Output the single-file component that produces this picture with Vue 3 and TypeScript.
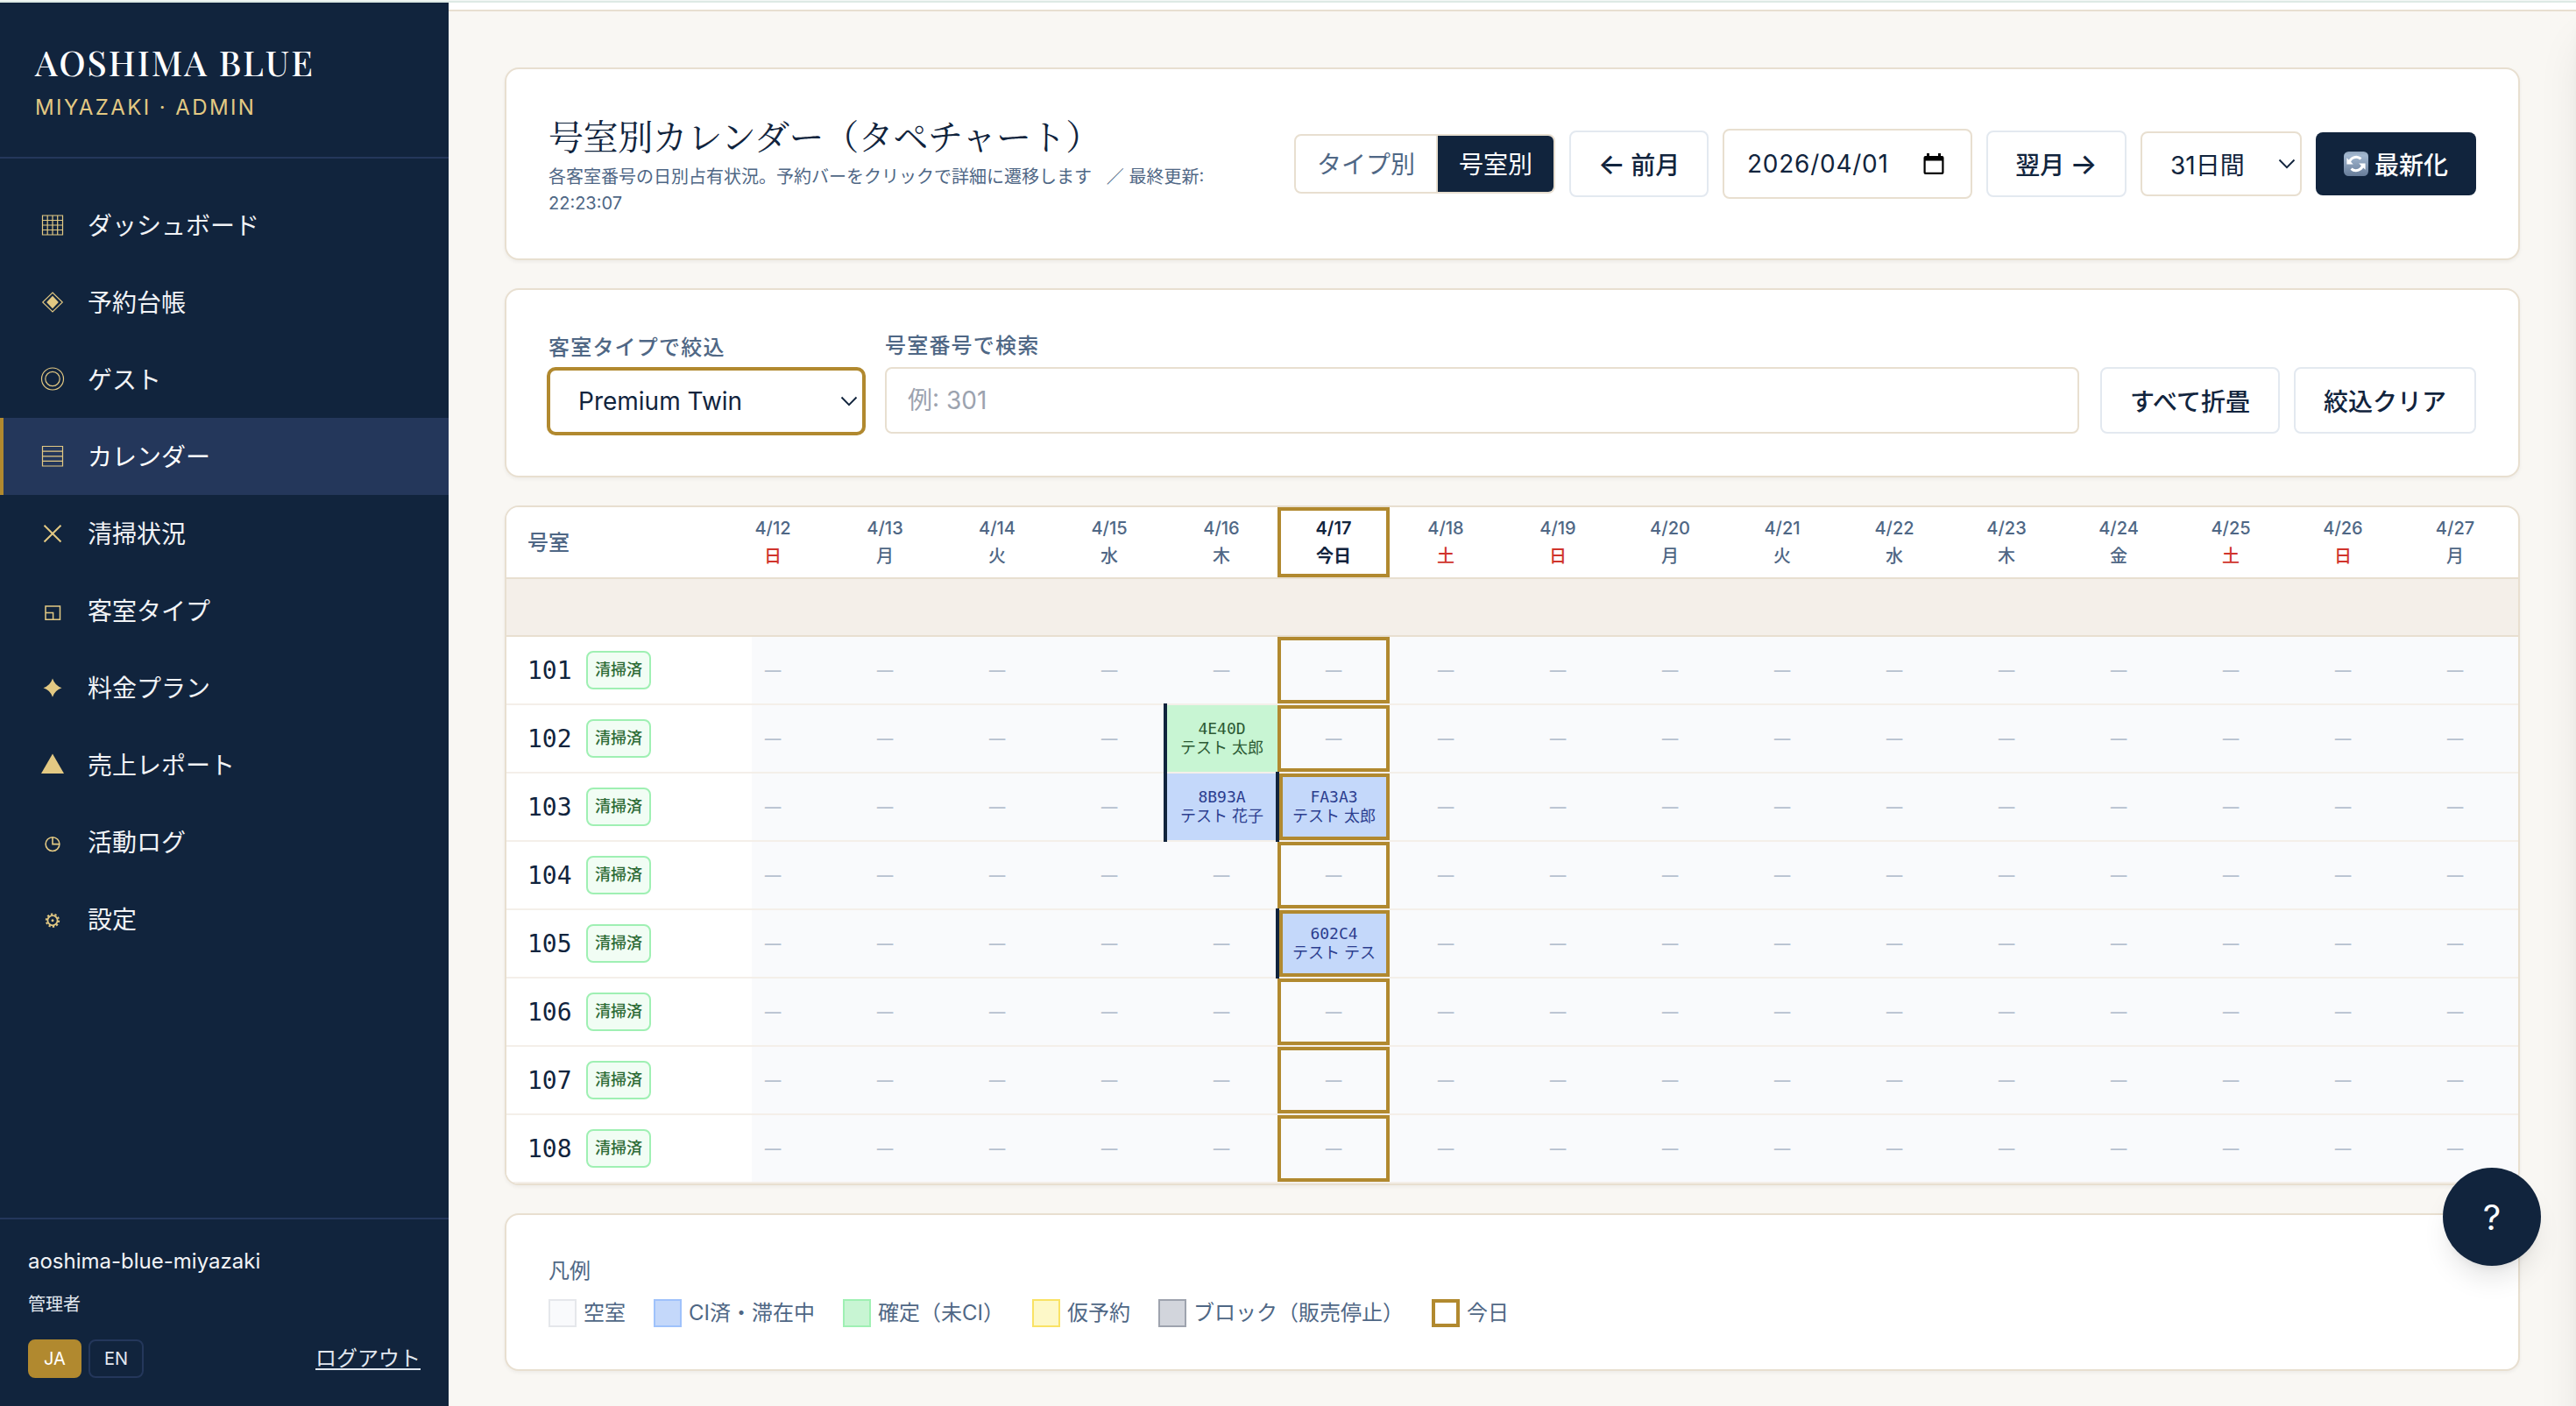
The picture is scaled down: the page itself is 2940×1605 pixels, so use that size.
<script setup lang="ts">
interface NavItem {
  icon: string
  label: string
  active?: boolean
}

interface Day {
  date: string
  weekday: string
  holiday?: boolean
  today?: boolean
}

interface Booking {
  code: string
  guest: string
  status: 'confirmed' | 'staying'
}

interface Room {
  number: string
  bookings: Record<string, Booking>
}

const navItems: NavItem[] = [
  { icon: 'grid', label: 'ダッシュボード' },
  { icon: 'diamond', label: '予約台帳' },
  { icon: 'rings', label: 'ゲスト' },
  { icon: 'rows', label: 'カレンダー', active: true },
  { icon: 'cross', label: '清掃状況' },
  { icon: 'corner', label: '客室タイプ' },
  { icon: 'star', label: '料金プラン' },
  { icon: 'triangle', label: '売上レポート' },
  { icon: 'clock', label: '活動ログ' },
  { icon: 'gear', label: '設定' },
]

const weekdays = ['日', '月', '火', '水', '木', '金', '土']

const days: Day[] = Array.from({ length: 16 }, (_, i) => {
  const today = i === 5
  return {
    date: `4/${12 + i}`,
    weekday: today ? '今日' : weekdays[i % 7],
    holiday: i % 7 === 0 || i % 7 === 6,
    today,
  }
})

const rooms: Room[] = [
  { number: '101', bookings: {} },
  { number: '102', bookings: { '4/16': { code: '4E40D', guest: 'テスト 太郎', status: 'confirmed' } } },
  {
    number: '103',
    bookings: {
      '4/16': { code: '8B93A', guest: 'テスト 花子', status: 'staying' },
      '4/17': { code: 'FA3A3', guest: 'テスト 太郎', status: 'staying' },
    },
  },
  { number: '104', bookings: {} },
  { number: '105', bookings: { '4/17': { code: '602C4', guest: 'テスト テス', status: 'staying' } } },
  { number: '106', bookings: {} },
  { number: '107', bookings: {} },
  { number: '108', bookings: {} },
]

const legend = [
  { kind: 'vacant', label: '空室' },
  { kind: 'staying', label: 'CI済・滞在中' },
  { kind: 'confirmed', label: '確定（未CI）' },
  { kind: 'tentative', label: '仮予約' },
  { kind: 'blocked', label: 'ブロック（販売停止）' },
  { kind: 'now', label: '今日' },
]
</script>

<template>
  <div class="page" lang="ja">
    <div class="top-line"></div>
    <div class="shell">
      <aside class="sidebar">
        <div class="brand">
          <div class="brand-name">AOSHIMA BLUE</div>
          <div class="brand-sub">MIYAZAKI · ADMIN</div>
        </div>
        <nav class="nav">
          <a v-for="item in navItems" :key="item.label" class="nav-item" :class="{ active: item.active }">
            <svg class="nav-icon" viewBox="0 0 40 40" fill="none" stroke="currentColor">
              <g v-if="item.icon === 'grid'" stroke-width="1.2">
                <path d="M8.5 9h23v22h-23zM14.2 9v22M20 9v22M25.7 9v22M8.5 14.5h23M8.5 20h23M8.5 25.5h23" />
              </g>
              <g v-else-if="item.icon === 'diamond'">
                <path d="M20 9L31.3 20L20 31L8.7 20z" stroke-width="1.1" />
                <path d="M20 12.8L26.8 20L20 27.2L13.2 20z" fill="currentColor" stroke="none" />
              </g>
              <g v-else-if="item.icon === 'rings'" stroke-width="1.2">
                <circle cx="20" cy="19.5" r="12.5" />
                <circle cx="20" cy="19.5" r="8.2" />
              </g>
              <g v-else-if="item.icon === 'rows'" stroke-width="1.2">
                <path d="M8.5 8.5h23v22.500h-23zM8.5 14.2h23M8.5 19.8h23M8.5 25.4h23" />
              </g>
              <path v-else-if="item.icon === 'cross'" d="M10.5 10.7L29.5 29.5M29.5 10.7L10.5 29.5" stroke-width="2" />
              <path
                v-else-if="item.icon === 'corner'"
                d="M12 15h16.5v15.3h-16.5zM12 22.500h8.6v7.8"
                stroke-width="1.5"
              />
              <path
                v-else-if="item.icon === 'star'"
                d="M20 9.5Q22.500 17.500 30.5 20.2Q22.500 22.800 20 30.8Q17.500 22.800 9.5 20.2Q17.500 17.500 20 9.5z"
                fill="currentColor"
                stroke="none"
              />
              <path v-else-if="item.icon === 'triangle'" d="M20 7.4L33 30H7z" fill="currentColor" stroke="none" />
              <g v-else-if="item.icon === 'clock'" stroke-width="1.6">
                <circle cx="20" cy="22.6" r="7.9" />
                <path d="M20 14.7v7.9h7.9" />
              </g>
              <g v-else>
                <circle cx="20" cy="21.7" r="5.6" stroke-width="1.8" />
                <circle cx="20" cy="21.7" r="1.5" fill="currentColor" stroke="none" />
                <circle cx="20" cy="21.7" r="7.2" stroke-width="2" stroke-dasharray="2.3 2.224" />
              </g>
            </svg>
            <span>{{ item.label }}</span>
          </a>
        </nav>
        <div class="account">
          <div class="account-name">aoshima-blue-miyazaki</div>
          <div class="account-role">管理者</div>
          <div class="account-actions">
            <div class="langs">
              <button class="lang on">JA</button>
              <button class="lang">EN</button>
            </div>
            <a class="logout">ログアウト</a>
          </div>
        </div>
      </aside>

      <main class="main">
        <div class="topbar"></div>
        <div class="content">
          <section class="card header-card">
            <div class="heading">
              <h1>号室別カレンダー（タペチャート）</h1>
              <p>
                各客室番号の日別占有状況。予約バーをクリックで詳細に遷移します &nbsp; ／ 最終更新: 22:23:07
              </p>
            </div>
            <div class="controls">
              <div class="segment">
                <button>タイプ別</button>
                <button class="on">号室別</button>
              </div>
              <button class="btn prev"><span class="arrow">←</span><span>前月</span></button>
              <div class="date-field">
                <span>2026/04/01</span>
                <svg viewBox="0 0 24 26" width="24" height="26">
                  <path d="M4 1h3v3h10V1h3v3h1.5a2 2 0 0 1 2 2v17a2 2 0 0 1-2 2h-19a2 2 0 0 1-2-2V6a2 2 0 0 1 2-2H4zM2.7 9.500v13.300h18.600V9.500z" fill="#000" fill-rule="evenodd" />
                </svg>
              </div>
              <button class="btn next"><span>翌月</span><span class="arrow">→</span></button>
              <div class="select range">
                <span>31日間</span>
                <svg class="chevron" viewBox="0 0 20 12"><path d="M1.5 1.500L10 10.2L18.500 1.500" /></svg>
              </div>
              <button class="btn primary">
                <svg class="refresh" viewBox="0 0 28 28">
                  <defs>
                    <linearGradient id="tile" x1="0" y1="0" x2="0" y2="1">
                      <stop offset="0" stop-color="#8fa3ba" />
                      <stop offset="0.15" stop-color="#a3b8d0" />
                      <stop offset="1" stop-color="#677c99" />
                    </linearGradient>
                  </defs>
                  <rect width="28" height="28" rx="5.5" fill="url(#tile)" />
                  <g fill="none" stroke="#fff" stroke-width="3">
                    <path d="M6.2 13.500A8 8 0 0 1 19.500 8.400" />
                    <path d="M21.800 14.500A8 8 0 0 1 8.500 19.600" />
                  </g>
                  <path d="M3.400 7.200V14.600H10.800zM24.600 20.800V13.400H17.200z" fill="#fff" />
                </svg>
                <span>最新化</span>
              </button>
            </div>
          </section>

          <section class="card filter-card">
            <div class="field type-field">
              <label>客室タイプで絞込</label>
              <div class="select focused">
                <span>Premium Twin</span>
                <svg class="chevron" viewBox="0 0 20 12"><path d="M1.5 1.500L10 10.2L18.500 1.500" /></svg>
              </div>
            </div>
            <div class="field search-field">
              <label>号室番号で検索</label>
              <div class="input">例: 301</div>
            </div>
            <div class="filter-actions">
              <button class="btn fold">すべて折畳</button>
              <button class="btn clear">絞込クリア</button>
            </div>
          </section>

          <section class="card chart">
            <div class="chart-head">
              <div class="room-head">号室</div>
              <div
                v-for="day in days"
                :key="day.date"
                class="day"
                :class="{ holiday: day.holiday, today: day.today }"
              >
                <span>{{ day.date }}</span>
                <span class="weekday">{{ day.weekday }}</span>
              </div>
            </div>
            <div class="group-row"></div>
            <div v-for="room in rooms" :key="room.number" class="room-row">
              <div class="room-cell">
                <span class="room-number">{{ room.number }}</span>
                <span class="badge">清掃済</span>
              </div>
              <div
                v-for="day in days"
                :key="day.date"
                class="slot"
                :class="[room.bookings[day.date]?.status, { booked: room.bookings[day.date], today: day.today }]"
              >
                <template v-if="room.bookings[day.date]">
                  <span class="code">{{ room.bookings[day.date].code }}</span>
                  <span class="guest">{{ room.bookings[day.date].guest }}</span>
                </template>
                <span v-else class="dash">—</span>
              </div>
            </div>
          </section>

          <section class="card legend-card">
            <div class="legend-title">凡例</div>
            <div class="legend">
              <div v-for="entry in legend" :key="entry.kind" class="legend-entry">
                <i class="swatch" :class="entry.kind"></i>
                <span>{{ entry.label }}</span>
              </div>
            </div>
          </section>
        </div>
      </main>
    </div>
    <div class="drawer"></div>
    <button class="help">?</button>
  </div>
</template>

<style>
html,
body {
  margin: 0;
  background: #f9f7f3;
}
</style>

<style scoped>
* {
  box-sizing: border-box;
}

.page {
  position: relative;
  width: 2940px;
  height: 1605px;
  overflow: hidden;
  display: flex;
  flex-direction: column;
  background: #f9f7f3;
  color: #11243d;
  font-family: Inter, 'Noto Sans CJK JP', sans-serif;
  font-size: 28px;
}

button {
  margin: 0;
  padding: 0;
  font: inherit;
  color: inherit;
  background: none;
  border: 0;
}

.top-line {
  flex: none;
  height: 3px;
  background: #dde9e5;
  border-top: 1px solid #f3f8f6;
}

.shell {
  flex: 1;
  display: flex;
  min-height: 0;
}

/* Sidebar */
.sidebar {
  flex: none;
  width: 512px;
  display: flex;
  flex-direction: column;
  background: #11243d;
  color: #f1f3f6;
}

.brand {
  height: 178px;
  padding: 42px 40px 0;
  border-bottom: 2px solid #24375b;
}

.brand-name {
  height: 52px;
  line-height: 52px;
  font-family: 'Playfair Display', 'Liberation Serif', serif;
  font-size: 40px;
  font-weight: 500;
  letter-spacing: 2px;
  color: #fff;
  white-space: nowrap;
}

.brand-sub {
  margin-top: 8px;
  line-height: 36px;
  font-size: 24px;
  letter-spacing: 2.4px;
  color: #e3c983;
}

.nav {
  flex: 1;
  padding-top: 32px;
}

.nav-item {
  height: 88px;
  padding-left: 36px;
  border-left: 4px solid transparent;
  display: flex;
  align-items: center;
  gap: 20px;
}

.nav-item span {
  padding-bottom: 3px;
}

.nav-item.active {
  background: #24375b;
  border-left-color: #b1892f;
  color: #fff;
}

.nav-icon {
  width: 40px;
  height: 40px;
  color: #e3c983;
}

.account {
  height: 215px;
  padding: 32px;
  border-top: 2px solid #24375b;
}

.account-name {
  height: 32px;
  line-height: 32px;
  font-size: 24px;
}

.account-role {
  margin-top: 17px;
  height: 33px;
  line-height: 33px;
  font-size: 20px;
  color: #e2e8f0;
}

.account-actions {
  margin-top: 23px;
  display: flex;
  justify-content: space-between;
  align-items: center;
}

.langs {
  display: flex;
  gap: 8px;
}

.lang {
  width: 63px;
  height: 44px;
  border: 2px solid #24375b;
  border-radius: 8px;
  font-size: 20px;
  color: #e2e8f0;
}

.lang.on {
  width: 61px;
  background: #b1892f;
  border-color: #b1892f;
  color: #fff;
}

.logout {
  font-size: 24px;
  line-height: 36px;
  color: #e2e8f0;
  text-decoration: underline;
  text-decoration-thickness: 2px;
  text-underline-offset: 3px;
}

/* Main column */
.main {
  flex: 1;
  min-width: 0;
}

.topbar {
  height: 10px;
  background: #fff;
  border-bottom: 2px solid #e8dfd0;
}

.content {
  padding: 64px;
  display: flex;
  flex-direction: column;
  gap: 32px;
}

.card {
  background: #fff;
  border: 2px solid #e8dfd0;
  border-radius: 16px;
  box-shadow: 0 2px 4px rgba(0, 0, 0, 0.05);
}

.header-card {
  height: 220px;
  padding: 48px;
  display: flex;
  align-items: center;
  justify-content: space-between;
}

.heading {
  width: 780px;
}

h1 {
  margin: 0;
  height: 60px;
  line-height: 53px;
  font-family: 'Noto Serif CJK JP', 'Noto Sans CJK JP', serif;
  font-size: 40px;
  font-weight: 400;
  letter-spacing: -0.4px;
  white-space: nowrap;
}

.heading p {
  margin: 0;
  font-size: 20px;
  line-height: 30px;
  color: #4f6785;
}

.controls {
  display: flex;
  align-items: center;
  gap: 16px;
}

.segment {
  height: 68px;
  display: flex;
  border: 2px solid #e8dfd0;
  border-radius: 8px;
  overflow: hidden;
}

.segment button {
  padding: 0 24px 2px;
  color: #4f6785;
  white-space: nowrap;
}

.segment .on {
  background: #11243d;
  border-left: 2px solid #e8dfd0;
  color: #fff;
}

.btn {
  height: 76px;
  padding-bottom: 1px;
  border: 2px solid #e3e9f0;
  border-radius: 8px;
  background: #fff;
  font-weight: 500;
  white-space: nowrap;
}

.prev,
.next {
  display: flex;
  align-items: center;
  justify-content: center;
  gap: 6px;
}

.prev {
  width: 159px;
}

.next {
  width: 160px;
}

.arrow {
  font-size: 33px;
  line-height: 36px;
}

.date-field {
  width: 285px;
  height: 80px;
  padding: 0 30px 0 26px;
  border: 2px solid #e8dfd0;
  border-radius: 8px;
  display: flex;
  align-items: center;
  justify-content: space-between;
  letter-spacing: 0.75px;
}

.select {
  height: 74px;
  border: 2px solid #e8dfd0;
  border-radius: 8px;
  background: #fff;
  display: flex;
  align-items: center;
  justify-content: space-between;
}

.range {
  width: 184px;
  padding: 0 5px 0 32px;
}

.chevron {
  width: 20px;
  height: 12px;
  fill: none;
  stroke: #11243d;
  stroke-width: 1.9;
}

.primary {
  width: 183px;
  height: 72px;
  display: flex;
  align-items: center;
  justify-content: center;
  gap: 7px;
  border: 0;
  background: #11243d;
  color: #fff;
}

.refresh {
  width: 28px;
  height: 28px;
}

/* Filters */
.filter-card {
  height: 216px;
  padding: 48px;
  display: flex;
  align-items: flex-end;
  gap: 24px;
}

.field label {
  display: block;
  height: 32px;
  margin-bottom: 8px;
  line-height: 32px;
  font-size: 24px;
  font-weight: 500;
  letter-spacing: 1.2px;
  color: #4f6785;
}

.type-field {
  width: 360px;
}

.search-field {
  flex: 1;
}

.focused {
  padding: 0 5px 0 32px;
  border-color: #b1892f;
  box-shadow: 0 0 0 2px #b1892f;
}

.input {
  height: 76px;
  padding: 0 24px;
  border: 2px solid #e8dfd0;
  border-radius: 8px;
  line-height: 73px;
  color: #9ca3af;
}

.filter-actions {
  display: flex;
  gap: 16px;
}

.fold {
  width: 205px;
}

.clear {
  width: 208px;
}

/* Room chart */
.chart {
  overflow: hidden;
}

.chart-head {
  height: 82px;
  display: flex;
  border-bottom: 2px solid #e8dfd0;
  color: #4f6785;
}

.room-head,
.room-cell {
  position: relative;
  z-index: 2;
  flex: none;
  width: 280px;
  margin-right: -40px;
  padding-left: 24px;
  display: flex;
  align-items: center;
  background: #fff;
}

.room-head {
  padding-bottom: 4px;
  font-size: 24px;
  font-weight: 500;
}

.day {
  flex: none;
  width: 128px;
  padding-top: 8px;
  display: flex;
  flex-direction: column;
  align-items: center;
  font-size: 20px;
  line-height: 32px;
  font-weight: 500;
}

.holiday .weekday {
  color: #d0342c;
}

.day.today {
  box-shadow: inset 0 0 0 4px #b1892f;
  color: #11243d;
  font-weight: 600;
}

.group-row {
  height: 66px;
  background: #f4efe9;
  border-bottom: 2px solid #e8dfd0;
}

.room-row {
  height: 78px;
  display: flex;
  background: #f9fafc;
  border-bottom: 2px solid #f4efe9;
}

.room-cell {
  gap: 16px;
}

.room-number {
  width: 51px;
  font-family: 'DejaVu Sans Mono', monospace;
  font-size: 28px;
}

.badge {
  width: 74px;
  height: 44px;
  border: 2px solid #9ff0b3;
  border-radius: 8px;
  background: #f1fdf4;
  color: #2c6a35;
  font-size: 18px;
  font-weight: 500;
  line-height: 40px;
  text-align: center;
}

.slot {
  position: relative;
  flex: none;
  width: 128px;
  display: flex;
  flex-direction: column;
  align-items: center;
  justify-content: center;
  background: #f9fafc;
}

.slot.today {
  box-shadow: inset 0 0 0 4px #b1892f;
}

.dash {
  padding-bottom: 4px;
  font-family: 'Noto Sans CJK JP', sans-serif;
  font-size: 23px;
  font-weight: 500;
  line-height: 30px;
  color: #b6c1cf;
}

.slot.booked {
  z-index: 1;
  padding-left: 1px;
  font-size: 18px;
  line-height: 22px;
}

.booked::before {
  content: '';
  position: absolute;
  left: -2px;
  top: -2px;
  bottom: -2px;
  width: 4px;
  background: #11243d;
}

.booked.today {
  box-shadow: inset 2px 0 0 #11243d, inset 6px 0 0 #b1892f, inset 0 0 0 4px #b1892f;
}

.code {
  font-family: 'DejaVu Sans Mono', monospace;
}

.slot.confirmed {
  background: #c8f5d3;
  color: #2c5a33;
}

.slot.staying {
  background: #c4d8fa;
  color: #2c3e8f;
}

/* Legend */
.legend-card {
  height: 180px;
  padding: 48px;
  font-size: 24px;
  line-height: 32px;
  color: #4f6785;
}

.legend {
  margin-top: 16px;
  display: flex;
  gap: 32px;
}

.legend-entry {
  display: flex;
  gap: 8px;
}

.swatch {
  width: 32px;
  height: 32px;
  border: 2px solid;
}

.swatch.vacant {
  background: #f9fafc;
  border-color: #e5e7eb;
}

.swatch.staying {
  background: #c4d8fa;
  border-color: #9fc2fb;
}

.swatch.confirmed {
  background: #c8f5d3;
  border-color: #9ff0b3;
}

.swatch.tentative {
  background: #fdf8c8;
  border-color: #f9e265;
}

.swatch.blocked {
  background: #d2d5dc;
  border-color: #9ea3ae;
}

.swatch.now {
  background: #fff;
  border: 4px solid #b1892f;
}

/* Off-canvas drawer: only its shadow reaches the page */
.drawer {
  position: absolute;
  left: 100%;
  top: 3px;
  bottom: -200px;
  width: 800px;
  box-shadow: 0 40px 50px -10px rgba(0, 0, 0, 0.1), 0 16px 20px -12px rgba(0, 0, 0, 0.1);
}

.help {
  position: absolute;
  right: 40px;
  bottom: 160px;
  width: 112px;
  height: 112px;
  border-radius: 50%;
  background: #11243d;
  color: #fff;
  font-size: 40px;
  font-weight: 400;
  box-shadow: 0 20px 30px -6px rgba(0, 0, 0, 0.1), 0 8px 12px -8px rgba(0, 0, 0, 0.1);
}
</style>
